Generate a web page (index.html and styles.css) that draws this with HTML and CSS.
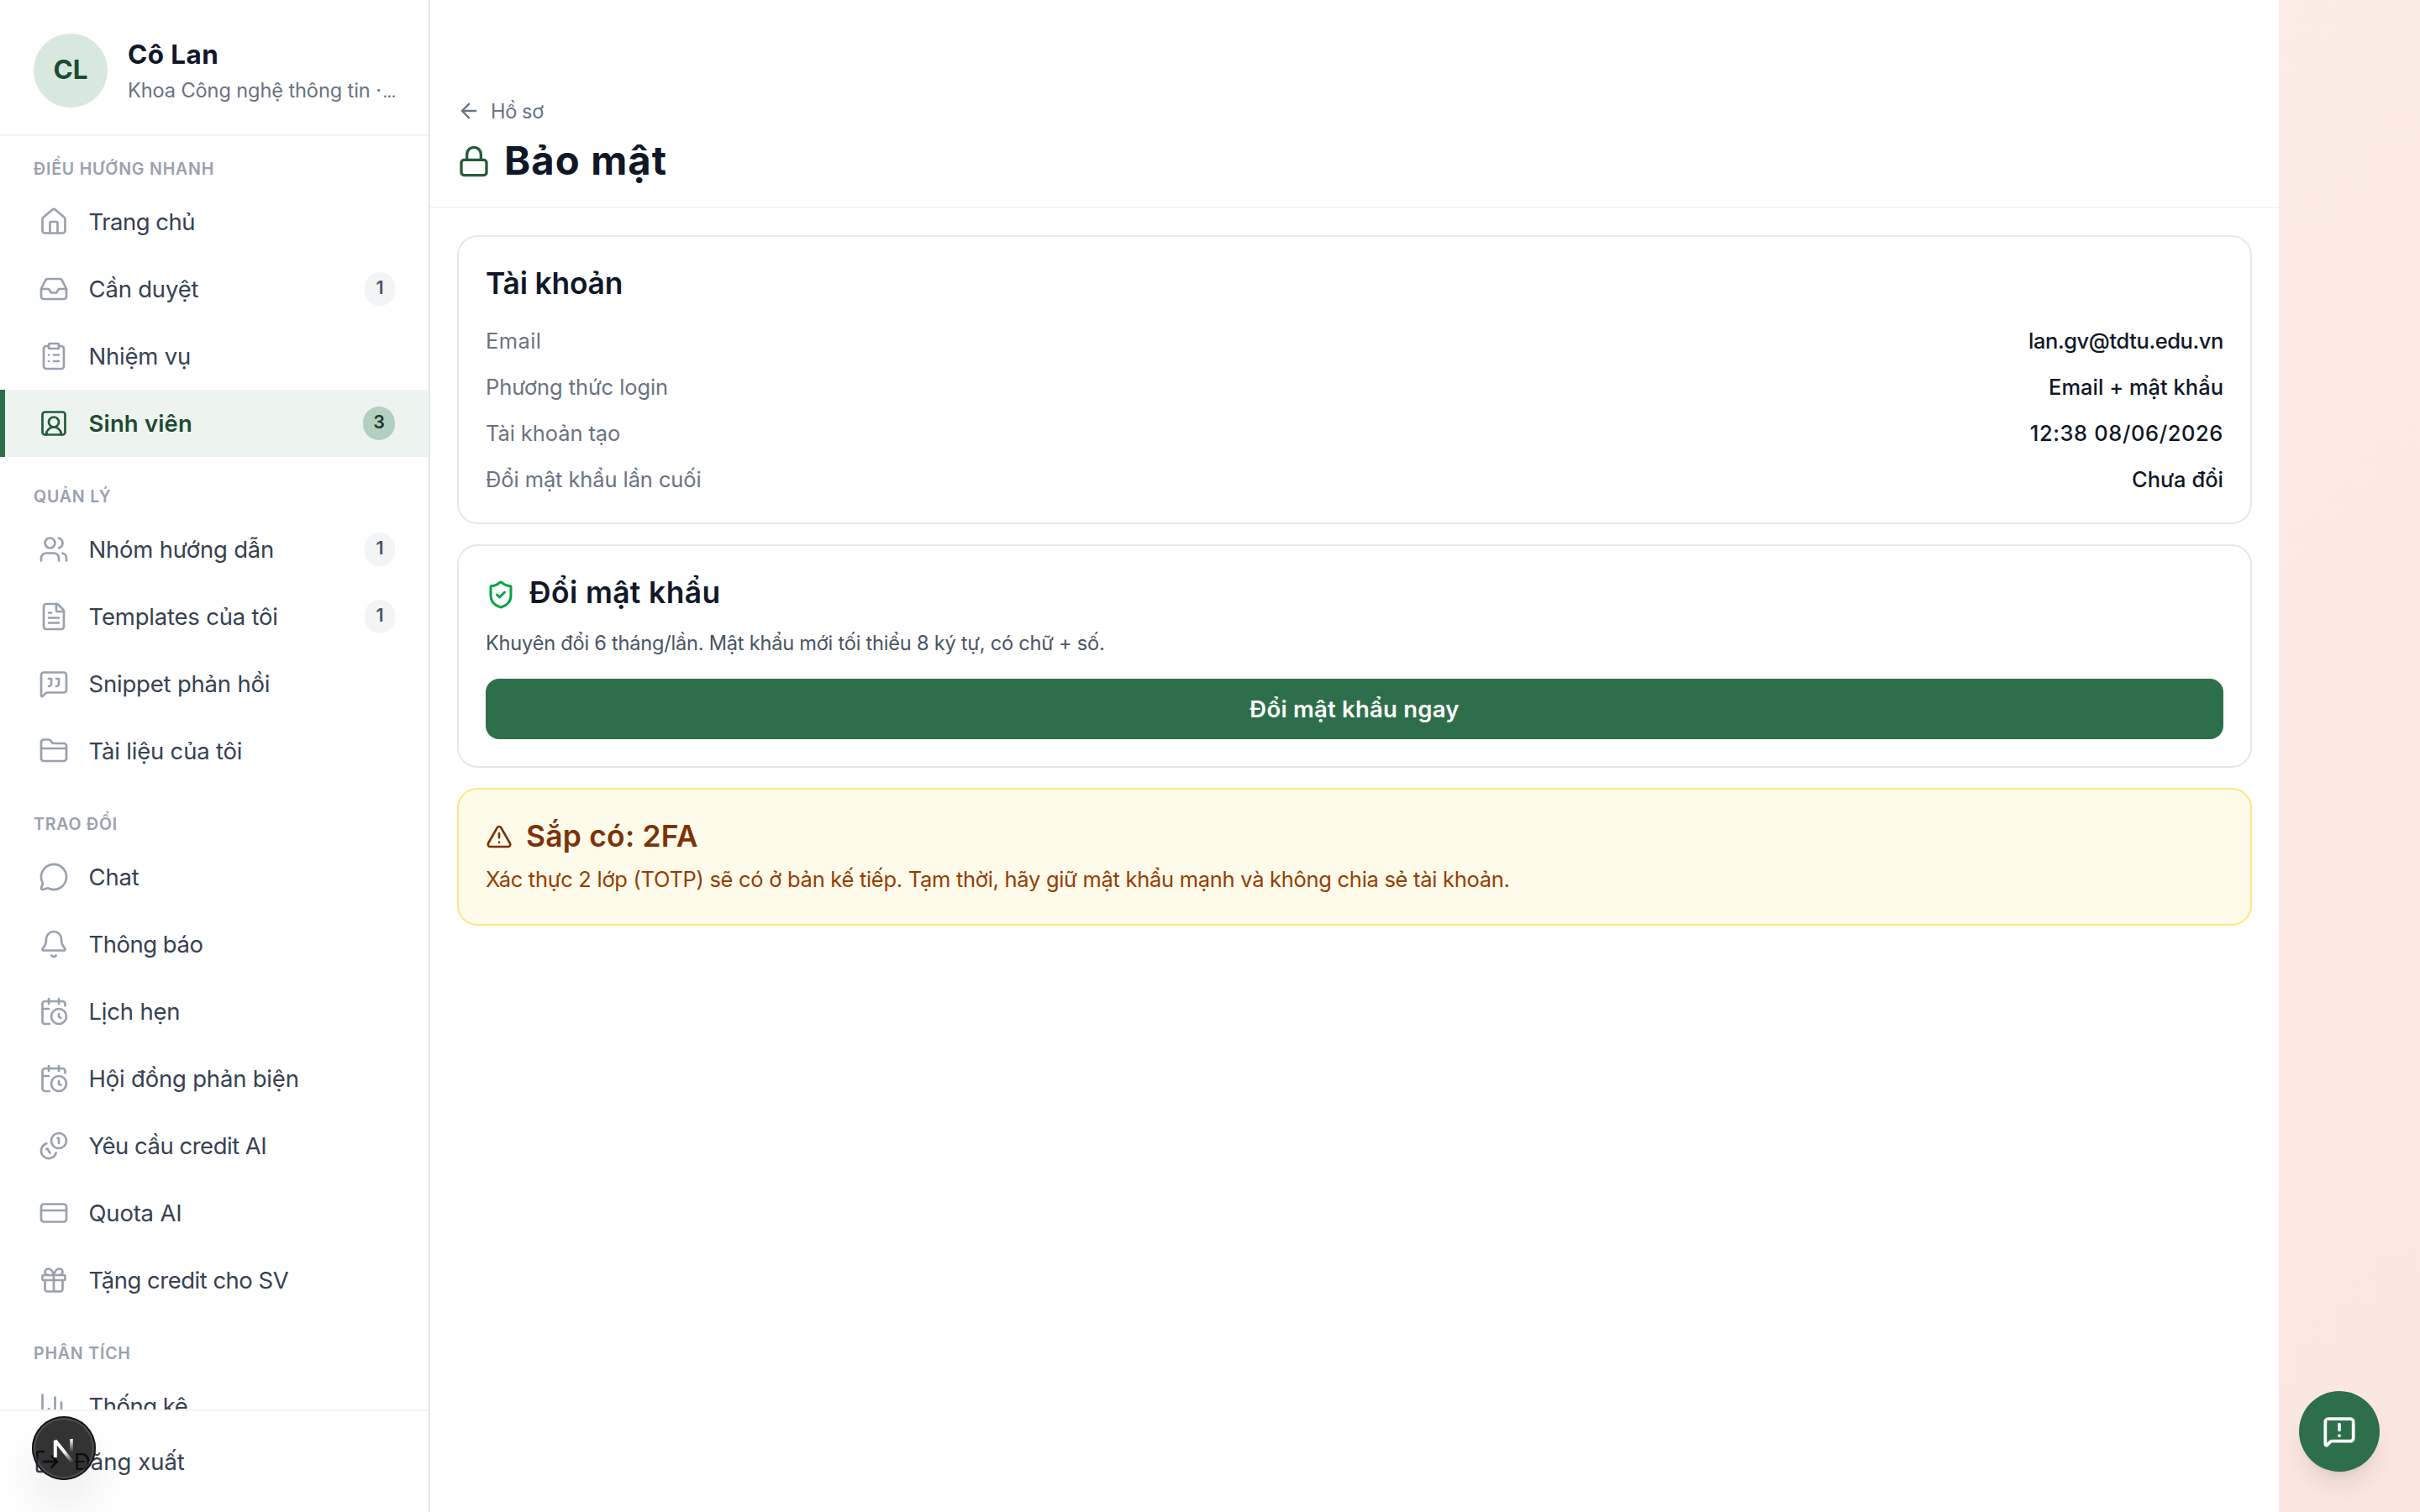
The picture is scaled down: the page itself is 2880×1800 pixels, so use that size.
FILE: index.html
```html
<!DOCTYPE html>
<html lang="vi">
<head>
<meta charset="utf-8">
<title>Bảo mật</title>
<link rel="stylesheet" href="styles.css">
</head>
<body>
<div class="app">
  <aside class="sidebar">
    <div class="profile">
      <div class="avatar">CL</div>
      <div class="profile-text">
        <div class="profile-name">Cô Lan</div>
        <div class="profile-dept">Khoa Công nghệ thông tin <span class="more">· <span class="dots">…</span></span></div>
      </div>
    </div>
    <nav class="nav">
      <h2 class="nav-label">ĐIỀU HƯỚNG NHANH</h2>
      <a class="nav-item tight"><svg class="icon" viewBox="0 0 24 24"><path d="M15 21v-8a1 1 0 0 0-1-1h-4a1 1 0 0 0-1 1v8"/><path d="M3 10a2 2 0 0 1 .709-1.528l7-6a2 2 0 0 1 2.582 0l7 6A2 2 0 0 1 21 10v9a2 2 0 0 1-2 2H5a2 2 0 0 1-2-2z"/></svg><span>Trang chủ</span></a>
      <a class="nav-item"><svg class="icon" viewBox="0 0 24 24"><path d="M22 12h-6l-2 3h-4l-2-3H2"/><path d="M5.45 5.11 2 12v6a2 2 0 0 0 2 2h16a2 2 0 0 0 2-2v-6l-3.45-6.89A2 2 0 0 0 16.76 4H7.24a2 2 0 0 0-1.79 1.11z"/></svg><span>Cần duyệt</span><b class="count">1</b></a>
      <a class="nav-item"><svg class="icon" viewBox="0 0 24 24"><rect width="8" height="4" x="8" y="2" rx="1"/><path d="M16 4h2a2 2 0 0 1 2 2v14a2 2 0 0 1-2 2H6a2 2 0 0 1-2-2V6a2 2 0 0 1 2-2h2"/><path d="M12 11h4M12 16h4M8 11h.01M8 16h.01"/></svg><span>Nhiệm vụ</span></a>
      <a class="nav-item active"><svg class="icon" viewBox="0 0 24 24"><path d="M18 21a6 6 0 0 0-12 0"/><circle cx="12" cy="11" r="4"/><rect width="18" height="18" x="3" y="3" rx="2"/></svg><span>Sinh viên</span><b class="count">3</b></a>

      <h2 class="nav-label">QUẢN LÝ</h2>
      <a class="nav-item"><svg class="icon" viewBox="0 0 24 24"><path d="M16 21v-2a4 4 0 0 0-4-4H6a4 4 0 0 0-4 4v2"/><path d="M16 3.128a4 4 0 0 1 0 7.744"/><path d="M22 21v-2a4 4 0 0 0-3-3.87"/><circle cx="9" cy="7" r="4"/></svg><span>Nhóm hướng dẫn</span><b class="count">1</b></a>
      <a class="nav-item"><svg class="icon" viewBox="0 0 24 24"><path d="M6 22a2 2 0 0 1-2-2V4a2 2 0 0 1 2-2h8a2.4 2.4 0 0 1 1.704.706l3.588 3.588A2.4 2.4 0 0 1 20 8v12a2 2 0 0 1-2 2z"/><path d="M14 2v5a1 1 0 0 0 1 1h5M10 9H8M16 13H8M16 17H8"/></svg><span>Templates của tôi</span><b class="count">1</b></a>
      <a class="nav-item"><svg class="icon" viewBox="0 0 24 24"><path d="M22 17a2 2 0 0 1-2 2H6.828a2 2 0 0 0-1.414.586l-2.202 2.202A.71.71 0 0 1 2 21.286V5a2 2 0 0 1 2-2h16a2 2 0 0 1 2 2z"/><path d="M14 14a2 2 0 0 0 2-2V8h-2M8 14a2 2 0 0 0 2-2V8H8"/></svg><span>Snippet phản hồi</span></a>
      <a class="nav-item"><svg class="icon" viewBox="0 0 24 24"><path d="M20 20a2 2 0 0 0 2-2V8a2 2 0 0 0-2-2h-7.9a2 2 0 0 1-1.69-.9L9.6 3.9A2 2 0 0 0 7.93 3H4a2 2 0 0 0-2 2v13a2 2 0 0 0 2 2Z"/><path d="M2 10h20"/></svg><span>Tài liệu của tôi</span></a>

      <h2 class="nav-label">TRAO ĐỔI</h2>
      <a class="nav-item"><svg class="icon" viewBox="0 0 24 24"><path d="M2.992 16.342a2 2 0 0 1 .094 1.167l-1.065 3.29a1 1 0 0 0 1.236 1.168l3.413-.998a2 2 0 0 1 1.099.092 10 10 0 1 0-4.777-4.719"/></svg><span>Chat</span></a>
      <a class="nav-item tight"><svg class="icon" viewBox="0 0 24 24"><path d="M10.268 21a2 2 0 0 0 3.464 0"/><path d="M3.262 15.326A1 1 0 0 0 4 17h16a1 1 0 0 0 .74-1.673C19.41 13.956 18 12.499 18 8A6 6 0 0 0 6 8c0 4.499-1.411 5.956-2.738 7.326"/></svg><span>Thông báo</span></a>
      <a class="nav-item"><svg class="icon" viewBox="0 0 24 24"><path d="M16 14v2.2l1.6 1M16 2v4M21 7.5V6a2 2 0 0 0-2-2H5a2 2 0 0 0-2 2v14a2 2 0 0 0 2 2h3.5M3 10h5M8 2v4"/><circle cx="16" cy="16" r="6"/></svg><span>Lịch hẹn</span></a>
      <a class="nav-item"><svg class="icon" viewBox="0 0 24 24"><path d="M16 14v2.2l1.6 1M16 2v4M21 7.5V6a2 2 0 0 0-2-2H5a2 2 0 0 0-2 2v14a2 2 0 0 0 2 2h3.5M3 10h5M8 2v4"/><circle cx="16" cy="16" r="6"/></svg><span>Hội đồng phản biện</span></a>
      <a class="nav-item tight"><svg class="icon" viewBox="0 0 24 24"><path d="M13.744 17.736a6 6 0 1 1-7.48-7.48"/><path d="M15 6h1v4"/><path d="m6.134 14.768.866-.5 2 3.464"/><circle cx="16" cy="8" r="6"/></svg><span>Yêu cầu credit AI</span></a>
      <a class="nav-item"><svg class="icon" viewBox="0 0 24 24"><rect width="20" height="14" x="2" y="5" rx="2"/><path d="M2 10h20"/></svg><span>Quota AI</span></a>
      <a class="nav-item tight"><svg class="icon" viewBox="0 0 24 24"><rect x="3" y="8" width="18" height="4" rx="1"/><path d="M12 8v13M19 12v7a2 2 0 0 1-2 2H7a2 2 0 0 1-2-2v-7"/><path d="M7.5 8a2.5 2.5 0 0 1 0-5A4.8 8 0 0 1 12 8a4.8 8 0 0 1 4.5-5 2.5 2.5 0 0 1 0 5"/></svg><span>Tặng credit cho SV</span></a>

      <h2 class="nav-label">PHÂN TÍCH</h2>
      <a class="nav-item tight"><svg class="icon" viewBox="0 0 24 24"><path d="M3 3v16a2 2 0 0 0 2 2h16M18 17V9M13 17V5M8 17v-3"/></svg><span>Thống kê</span></a>
    </nav>
    <div class="logout">
      <svg class="icon" viewBox="0 0 24 24"><path d="m16 17 5-5-5-5M21 12H9M9 21H5a2 2 0 0 1-2-2V5a2 2 0 0 1 2-2h4"/></svg>
      <span>Đăng xuất</span>
    </div>
  </aside>

  <main class="main">
    <header class="page-head">
      <a class="back"><svg class="icon" viewBox="0 0 24 24"><path d="m12 19-7-7 7-7M19 12H5"/></svg><span>Hồ sơ</span></a>
      <h1 class="page-title"><svg class="icon" viewBox="0 0 24 24"><rect width="18" height="11" x="3" y="11" rx="2"/><path d="M7 11V7a5 5 0 0 1 10 0v4"/></svg><span>Bảo mật</span></h1>
    </header>
    <div class="cards">
      <section class="card">
        <h2 class="card-title account-title">Tài khoản</h2>
        <dl class="rows">
          <div class="row"><dt class="wide">Email</dt><dd class="mail">lan.gv@tdtu.edu.vn</dd></div>
          <div class="row"><dt>Phương thức login</dt><dd>Email + mật khẩu</dd></div>
          <div class="row"><dt>Tài khoản tạo</dt><dd class="date">12:38 08/06/2026</dd></div>
          <div class="row"><dt>Đổi mật khẩu lần cuối</dt><dd>Chưa đổi</dd></div>
        </dl>
      </section>
      <section class="card">
        <h2 class="card-title password-title"><svg class="icon" viewBox="0 0 24 24"><path d="M20 13c0 5-3.5 7.5-7.66 8.95a1 1 0 0 1-.67-.01C7.5 20.5 4 18 4 13V6a1 1 0 0 1 1-1c2 0 4.5-1.2 6.24-2.72a1.17 1.17 0 0 1 1.52 0C14.51 3.81 17 5 19 5a1 1 0 0 1 1 1z"/><path d="m9 12 2 2 4-4"/></svg><span>Đổi mật khẩu</span></h2>
        <p class="hint">Khuyên đổi 6 tháng/lần. Mật khẩu mới tối thiểu 8 ký tự, có chữ + số.</p>
        <button class="button">Đổi mật khẩu ngay</button>
      </section>
      <section class="card card-warn">
        <h2 class="card-title warn-title"><svg class="icon" viewBox="0 0 24 24"><path d="m21.73 18-8-14a2 2 0 0 0-3.48 0l-8 14A2 2 0 0 0 4 21h16a2 2 0 0 0 1.73-3"/><path d="M12 9v4M12 17h.01"/></svg><span>Sắp có: 2FA</span></h2>
        <p class="warn-text">Xác thực 2 lớp (TOTP) sẽ có ở bản kế tiếp. Tạm thời, hãy giữ mật khẩu mạnh và không chia sẻ tài khoản.</p>
      </section>
    </div>
  </main>
</div>

<button class="feedback" aria-label="Góp ý"><svg class="icon" viewBox="0 0 24 24"><path d="M22 17a2 2 0 0 1-2 2H6.828a2 2 0 0 0-1.414.586l-2.202 2.202A.71.71 0 0 1 2 21.286V5a2 2 0 0 1 2-2h16a2 2 0 0 1 2 2z"/><path d="M12 15h.01M12 7v4"/></svg></button>

<div class="dev-badge">
  <svg viewBox="0 0 76 76">
    <defs>
      <linearGradient id="fadeA" gradientUnits="userSpaceOnUse" x1="38" y1="42" x2="48" y2="55"><stop offset="0" stop-color="#fff"/><stop offset="1" stop-color="#fff" stop-opacity="0"/></linearGradient>
      <linearGradient id="fadeB" gradientUnits="userSpaceOnUse" x1="0" y1="27" x2="0" y2="43"><stop offset="0" stop-color="#fff"/><stop offset="1" stop-color="#fff" stop-opacity="0"/></linearGradient>
    </defs>
    <path d="M27.8 49V29L48.5 55" fill="none" stroke="url(#fadeA)" stroke-width="4" stroke-linejoin="bevel"/>
    <rect x="45.2" y="27" width="3.6" height="16" fill="url(#fadeB)"/>
  </svg>
</div>
</body>
</html>
```
FILE: styles.css
```css
* { box-sizing: border-box; margin: 0; padding: 0; }

body {
  height: 1800px;
  overflow: hidden;
  font-family: Inter, "Noto Sans", "Liberation Sans", sans-serif;
  color: #101828;
  background: linear-gradient(135deg, #fbece5 58%, #fbe7e0 100%);
}

.app {
  display: flex;
  width: 2712px;
  height: 1800px;
  background: #fff;
}

.icon {
  flex: none;
  fill: none;
  stroke: currentColor;
  stroke-width: 2;
  stroke-linecap: round;
  stroke-linejoin: round;
}

/* Sidebar */
.sidebar {
  display: flex;
  flex-direction: column;
  flex: none;
  width: 512px;
  border-right: 2px solid #e5e7eb;
}

.profile {
  display: flex;
  align-items: center;
  gap: 24px;
  height: 162px;
  padding: 8px 40px 0;
  border-bottom: 2px solid #f3f4f6;
  white-space: nowrap;
}

.avatar {
  display: flex;
  flex: none;
  align-items: center;
  justify-content: center;
  width: 88px;
  height: 88px;
  padding-bottom: 3px;
  border-radius: 50%;
  background: #d7e9df;
  color: #1f4a32;
  font-size: 31.5px;
  font-weight: 700;
}

.profile-text { padding-top: 5px; }

.profile-name {
  font-size: 31.5px;
  font-weight: 700;
  line-height: 40px;
  letter-spacing: 0.4px;
}

.profile-dept {
  padding-top: 5px;
  color: #6a7282;
  font-size: 23.6px;
  line-height: 36px;
  letter-spacing: -0.12px;
}

.more { letter-spacing: -2.4px; }
.dots { font-size: 16px; font-weight: 600; letter-spacing: 0; }

.nav {
  flex: 1;
  min-height: 0;
  padding-top: 16px;
  overflow: hidden;
}

.nav-label {
  height: 46px;
  margin-top: 24px;
  padding-left: 40px;
  color: #99a1af;
  font-size: 19.6px;
  font-weight: 600;
  line-height: 46px;
  letter-spacing: 0.78px;
}

.nav-label:first-child { margin-top: 0; }

.nav-item {
  display: flex;
  align-items: center;
  gap: 23.5px;
  height: 80px;
  padding-right: 40px;
  padding-left: 40px;
  border-left: 6px solid transparent;
  color: #364153;
  font-size: 27.5px;
  letter-spacing: -0.2px;
}

.nav-item .icon {
  width: 36px;
  height: 36px;
  color: #99a1af;
  stroke-width: 1.8;
}

.tight { letter-spacing: -0.5px; }

.active {
  border-left-color: #2e6f4b;
  background: #edf4f0;
  color: #1f4a32;
  font-weight: 600;
  letter-spacing: 0.15px;
}

.active .icon { color: #235c3c; }

.count {
  min-width: 36px;
  height: 40px;
  margin-left: auto;
  padding: 0 12px;
  border-radius: 20px;
  background: #f3f4f6;
  color: #4a5565;
  font-size: 21.6px;
  font-weight: 600;
  line-height: 36px;
  letter-spacing: 0;
  text-align: center;
}

.active .count {
  background: #b2d0c0;
  color: #1a3827;
}

.logout {
  display: flex;
  align-items: center;
  gap: 16px;
  height: 122px;
  padding-left: 40px;
  border-top: 2px solid #f3f4f6;
  color: #364153;
  font-size: 27.5px;
}

.logout .icon { width: 32px; height: 32px; }

/* Page */
.main { flex: 1; }

.page-head {
  height: 248px;
  padding: 114px 32px 0;
  border-bottom: 2px solid #f3f4f6;
}

.back {
  display: flex;
  align-items: center;
  gap: 12px;
  height: 36px;
  color: #6a7282;
  font-size: 23.6px;
  letter-spacing: -0.4px;
}

.back .icon { width: 28px; height: 28px; }

.page-title {
  display: flex;
  align-items: center;
  gap: 16px;
  height: 60px;
  margin-top: 12px;
  font-size: 47.2px;
  font-weight: 700;
  letter-spacing: 1.1px;
  line-height: 57px;
}

.page-title span { padding-bottom: 3px; }

.page-title .icon { width: 40px; height: 40px; color: #235c3c; }

.cards {
  display: flex;
  flex-direction: column;
  gap: 24px;
  padding: 32px;
}

.card {
  padding: 32px;
  border: 2px solid #e5e7eb;
  border-radius: 24px;
}

.card-title {
  display: flex;
  align-items: center;
  gap: 16px;
  height: 48px;
  font-size: 35.4px;
  font-weight: 600;
}

.account-title { padding-bottom: 2px; letter-spacing: -0.2px; }

.rows {
  display: flex;
  flex-direction: column;
  gap: 16px;
  margin-top: 24px;
}

.row {
  display: flex;
  justify-content: space-between;
  font-size: 25.5px;
  line-height: 39px;
}

.row dt { color: #6a7282; letter-spacing: -0.1px; }
.row .wide { letter-spacing: 0.4px; }
.row dd { font-weight: 500; }
.row .mail { letter-spacing: -0.42px; }
.row .date { letter-spacing: 0.6px; }

.password-title { height: 50px; letter-spacing: 0.4px; }
.password-title span { padding-bottom: 4px; }
.password-title .icon { width: 36px; height: 36px; margin-top: 2px; color: #00a63e; }

.hint {
  margin-top: 16px;
  color: #4a5565;
  font-size: 23.6px;
  line-height: 36px;
  letter-spacing: -0.23px;
}

.button {
  display: block;
  width: 100%;
  height: 72px;
  margin-top: 24px;
  border: 0;
  border-radius: 16px;
  background: #2e6f4b;
  color: #fff;
  font: 600 27.5px Inter, "Noto Sans", sans-serif;
  letter-spacing: 0.22px;
}

.card-warn {
  border-color: #fee685;
  background: #fffbeb;
}

.warn-title { color: #7b3306; letter-spacing: 0.23px; }
.warn-title span { padding-bottom: 2px; }
.warn-title .icon { width: 32px; height: 32px; }

.warn-text {
  margin-top: 7px;
  padding-bottom: 2px;
  color: #973c00;
  font-size: 25.5px;
  line-height: 39px;
  letter-spacing: -0.29px;
}

/* Floating controls */
.feedback {
  position: absolute;
  right: 48px;
  bottom: 48px;
  display: flex;
  align-items: center;
  justify-content: center;
  width: 96px;
  height: 96px;
  border: 0;
  border-radius: 50%;
  background: #2e6f4b;
  color: #fff;
  box-shadow: 0 20px 30px -6px rgba(0, 0, 0, 0.1), 0 8px 12px -8px rgba(0, 0, 0, 0.1);
}

.feedback .icon { width: 40px; height: 40px; stroke-width: 2.25; }

.dev-badge {
  position: absolute;
  left: 38px;
  top: 1686px;
  width: 76px;
  height: 76px;
  border-radius: 50%;
  background: rgba(0, 0, 0, 0.8);
  box-shadow: inset 0 0 0 2px #171717, inset 0 0 0 4px rgba(255, 255, 255, 0.14), 0 32px 64px -16px rgba(0, 0, 0, 0.24);
}

.dev-badge svg { display: block; width: 76px; height: 76px; }
```
